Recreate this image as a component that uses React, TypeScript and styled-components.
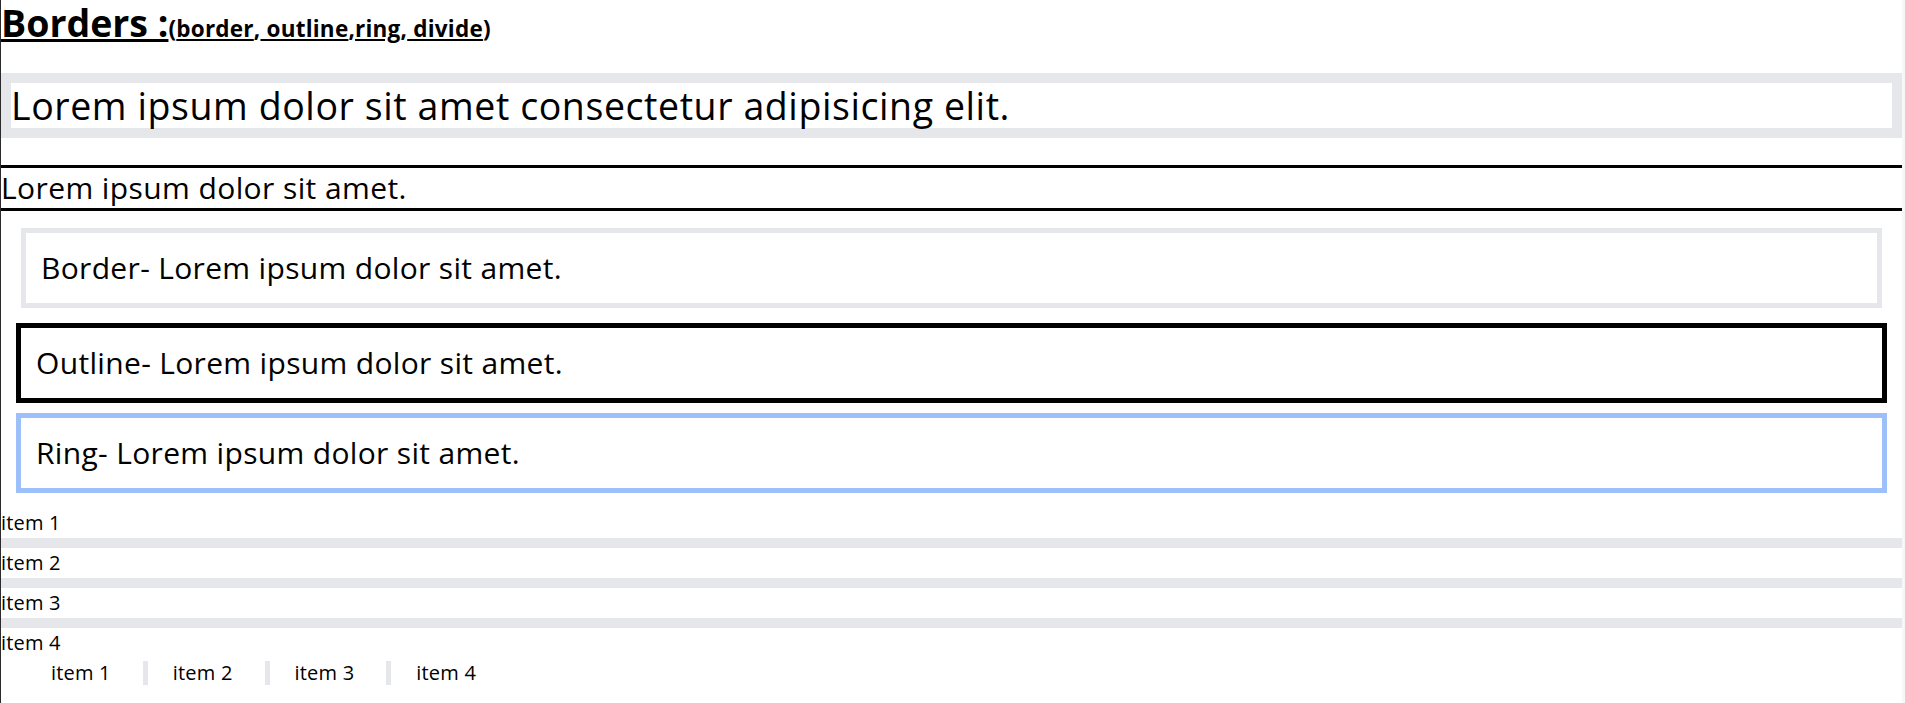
import styled, { createGlobalStyle } from "styled-components";

const GlobalStyle = createGlobalStyle`
  html, body {
    margin: 0;
    padding: 0;
  }
  body {
    background: #f7f7f7;
    color: #000;
    font-family: "Open Sans", "Noto Sans", sans-serif;
  }
`;

const Page = styled.div`
  width: 1902px;
  min-height: 703px;
  box-sizing: border-box;
  border-left: 1px solid #2b2b2b;
  background: #fff;
`;

const Heading = styled.h1`
  margin: 0;
  height: 45px;
  font-size: 37.5px;
  line-height: 45px;
  font-weight: 700;
  white-space: nowrap;
`;

const Under = styled.span`
  text-decoration: underline;
`;

const Sub = styled.span`
  font-size: 22.5px;
  letter-spacing: 0.01em;
`;

const GrayBox = styled.div`
  margin-top: 28px;
  border: 10px solid #e5e7eb;
  font-size: 37.5px;
  line-height: 45px;
  letter-spacing: 0.0155em;
`;

const RuledLine = styled.div`
  margin-top: 27px;
  border-top: 3px solid #000;
  border-bottom: 3px solid #000;
  font-size: 30px;
  line-height: 40px;
  letter-spacing: 0.0135em;
`;

const Stack = styled.div`
  display: flex;
  flex-direction: column;
  gap: 20px;
  padding: 17px 20px 20px;
`;

const Card = styled.div<{ $kind: "border" | "outline" | "ring" }>`
  padding: 15px;
  font-size: 30px;
  line-height: 40px;
  letter-spacing: 0.011em;
  ${({ $kind }) =>
    $kind === "border"
      ? "border: 5px solid #e5e7eb;"
      : $kind === "outline"
      ? "outline: 5px solid #000;"
      : "box-shadow: 0 0 0 5px rgba(59, 130, 246, 0.5);"}
`;

const DivideList = styled.ul`
  margin: 0;
  padding: 0;
  list-style: none;

  li {
    font-size: 20px;
    line-height: 30px;
    letter-spacing: 0.01em;
  }
  li + li {
    border-top: 10px solid #e5e7eb;
  }
`;

const Row = styled.div`
  display: flex;
  align-items: center;
  height: 30px;
  padding-left: 25px;
`;

const RowItem = styled.div`
  height: 24px;
  padding: 0 25px;
  font-size: 20px;
  line-height: 24px;
  letter-spacing: 0.01em;

  & + & {
    margin-left: 7px;
    border-left: 5px solid #e5e7eb;
  }
`;

const items = ["item 1", "item 2", "item 3", "item 4"];

export default function App() {
  return (
    <Page>
      <GlobalStyle />
      <Heading>
        <Under>Borders :</Under>
        <Sub>
          (<Under>border</Under>,<Under> outline</Under>,<Under>ring</Under>,
          <Under> divide</Under>)
        </Sub>
      </Heading>

      <GrayBox>Lorem ipsum dolor sit amet consectetur adipisicing elit.</GrayBox>

      <RuledLine>Lorem ipsum dolor sit amet.</RuledLine>

      <Stack>
        <Card $kind="border">Border- Lorem ipsum dolor sit amet.</Card>
        <Card $kind="outline">Outline- Lorem ipsum dolor sit amet.</Card>
        <Card $kind="ring">Ring- Lorem ipsum dolor sit amet.</Card>
      </Stack>

      <DivideList>
        {items.map((item) => (
          <li key={item}>{item}</li>
        ))}
      </DivideList>

      <Row>
        {items.map((item) => (
          <RowItem key={item}>{item}</RowItem>
        ))}
      </Row>
    </Page>
  );
}
